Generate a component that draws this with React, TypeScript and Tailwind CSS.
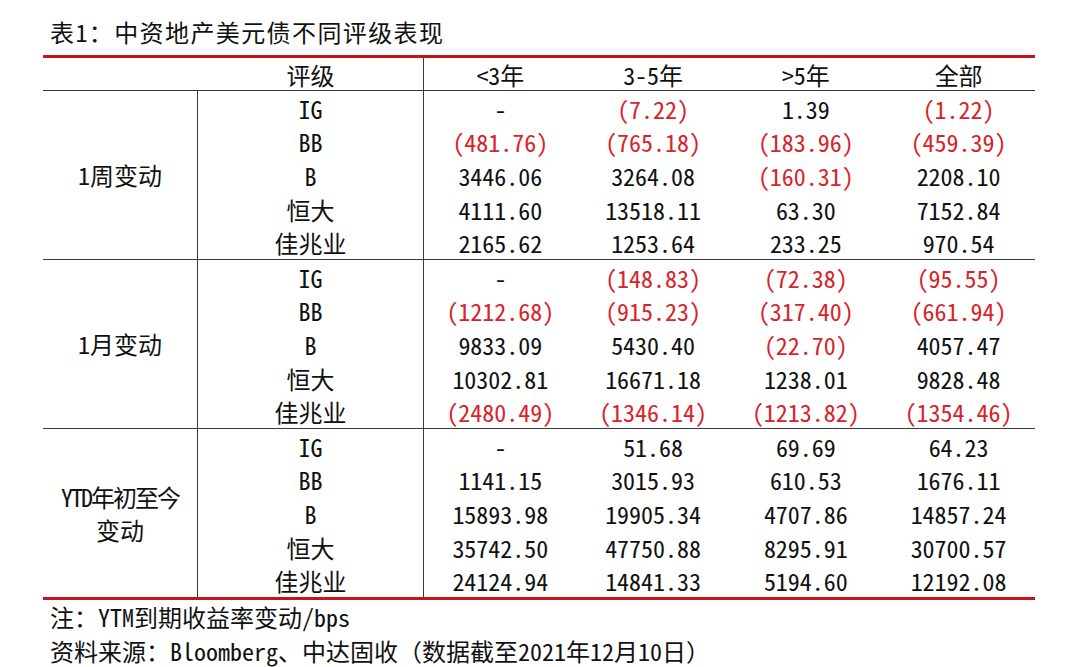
import React from "react";

const FONT = '"Noto Sans Mono CJK SC", "Noto Sans CJK SC", sans-serif';

type Group = { label: string[]; rows: string[][] };

const groups: Group[] = [
  {
    label: ["1周变动"],
    rows: [
      ["IG", "-", "(7.22)", "1.39", "(1.22)"],
      ["BB", "(481.76)", "(765.18)", "(183.96)", "(459.39)"],
      ["B", "3446.06", "3264.08", "(160.31)", "2208.10"],
      ["恒大", "4111.60", "13518.11", "63.30", "7152.84"],
      ["佳兆业", "2165.62", "1253.64", "233.25", "970.54"],
    ],
  },
  {
    label: ["1月变动"],
    rows: [
      ["IG", "-", "(148.83)", "(72.38)", "(95.55)"],
      ["BB", "(1212.68)", "(915.23)", "(317.40)", "(661.94)"],
      ["B", "9833.09", "5430.40", "(22.70)", "4057.47"],
      ["恒大", "10302.81", "16671.18", "1238.01", "9828.48"],
      ["佳兆业", "(2480.49)", "(1346.14)", "(1213.82)", "(1354.46)"],
    ],
  },
  {
    label: ["YTD年初至今", "变动"],
    rows: [
      ["IG", "-", "51.68", "69.69", "64.23"],
      ["BB", "1141.15", "3015.93", "610.53", "1676.11"],
      ["B", "15893.98", "19905.34", "4707.86", "14857.24"],
      ["恒大", "35742.50", "47750.88", "8295.91", "30700.57"],
      ["佳兆业", "24124.94", "14841.33", "5194.60", "12192.08"],
    ],
  },
];

function Value({ v }: { v: string }) {
  const red = v.startsWith("(");
  return (
    <div
      className={
        "flex h-[33.6px] items-center justify-center pt-[2px] whitespace-nowrap " +
        (red ? "text-[#d8232a]" : "text-[#111111]")
      }
    >
      {v}
    </div>
  );
}

export default function App() {
  return (
    <div
      className="w-[1080px] h-[667px] bg-white text-[24px] text-[#111111] overflow-hidden"
      style={{ fontFamily: FONT }}
    >
      <div className="h-[55px] pl-[50px] pt-[16px] leading-[32px] font-medium tracking-[1.4px] whitespace-nowrap">
        表1：中资地产美元债不同评级表现
      </div>
      <div className="ml-[43px] w-[992px] border-t-[3px] border-b-[3px] border-[#c3161c]">
        <div className="grid grid-cols-[155px_226px_1fr_1fr_1fr_1fr] h-[33px] border-b border-[#3a3a3a] leading-none">
          <div />
          <div className="flex items-center justify-center border-r border-[#3a3a3a] pt-[2px]">评级</div>
          <div className="flex items-center justify-center pt-[2px]">&lt;3年</div>
          <div className="flex items-center justify-center pt-[2px]">3-5年</div>
          <div className="flex items-center justify-center pt-[2px]">&gt;5年</div>
          <div className="flex items-center justify-center pt-[2px]">全部</div>
        </div>
        {groups.map((g, gi) => (
          <div
            key={gi}
            className={
              "grid grid-cols-[155px_226px_1fr_1fr_1fr_1fr] leading-none " +
              (gi > 0 ? "border-t border-[#3a3a3a]" : "")
            }
          >
            <div className="row-span-5 flex flex-col items-center justify-center border-r border-[#3a3a3a] leading-[33px] whitespace-nowrap">
              {g.label.map((l, li) => (
                <div key={li} className={l.length > 5 ? "tracking-[-2px]" : ""}>
                  {l}
                </div>
              ))}
            </div>
            {g.rows.map((r, ri) => (
              <React.Fragment key={ri}>
                <div className="flex h-[33.6px] items-center justify-center border-r border-[#3a3a3a] pt-[2px]">
                  {r[0]}
                </div>
                {r.slice(1).map((v, vi) => (
                  <Value key={vi} v={v} />
                ))}
              </React.Fragment>
            ))}
          </div>
        ))}
      </div>
      <div className="pl-[50px] leading-[34px] whitespace-nowrap">
        <div>注：YTM到期收益率变动/bps</div>
        <div>资料来源：Bloomberg、中达固收（数据截至2021年12月10日）</div>
      </div>
    </div>
  );
}
